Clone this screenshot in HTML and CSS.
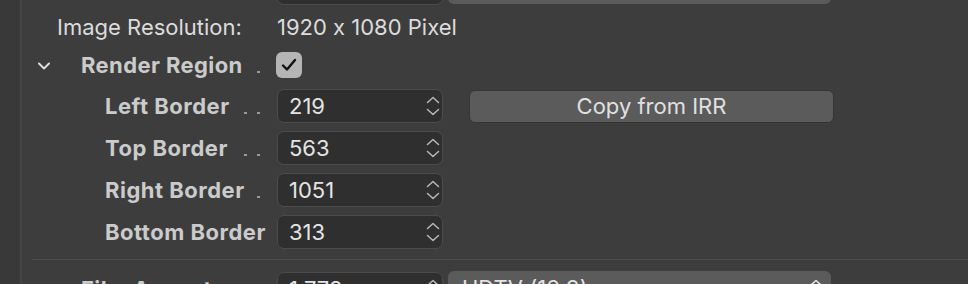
FILE: index.html
```html
<!DOCTYPE html>
<html lang="en">
<head>
    <meta charset="UTF-8">
    <title>Render Settings</title>
    <link rel="stylesheet" href="styles.css">
</head>
<body>
    <div class="window">
        <div class="gutter"></div>
        <div class="panel">
            <!-- previous row, mostly scrolled out of view -->
            <div class="row row-top">
                <div class="label"></div>
                <div class="field"></div>
                <div class="popup"></div>
            </div>

            <div class="row row-info">
                <div class="label info-label">Image Resolution:</div>
                <div class="info-value">1920 x 1080 Pixel</div>
            </div>

            <div class="row row-group">
                <div class="label group-label">
                    <svg class="disclosure" width="14" height="10" viewBox="0 0 14 10">
                        <path d="M2 2.5 L7 7.5 L12 2.5" />
                    </svg>
                    <span class="name">Render Region</span>
                    <span class="leader"><i></i></span>
                </div>
                <div class="checkbox">
                    <svg width="26" height="26" viewBox="0 0 26 26">
                        <path d="M7 13.5 L11 17.5 L19 8" />
                    </svg>
                </div>
            </div>

            <div class="row row-field">
                <div class="label sub-label">
                    <span class="name">Left Border</span>
                    <span class="leader"><i></i><i></i></span>
                </div>
                <div class="field">
                    <span>219</span>
                    <svg class="stepper" width="14" height="22" viewBox="0 0 14 22">
                        <path d="M1.5 7.5 L7 2.5 L12.5 7.5" />
                        <path d="M1.5 14.5 L7 19.5 L12.5 14.5" />
                    </svg>
                </div>
                <button class="btn">Copy from IRR</button>
            </div>

            <div class="row row-field">
                <div class="label sub-label">
                    <span class="name">Top Border</span>
                    <span class="leader"><i></i><i></i></span>
                </div>
                <div class="field">
                    <span>563</span>
                    <svg class="stepper" width="14" height="22" viewBox="0 0 14 22">
                        <path d="M1.5 7.5 L7 2.5 L12.5 7.5" />
                        <path d="M1.5 14.5 L7 19.5 L12.5 14.5" />
                    </svg>
                </div>
            </div>

            <div class="row row-field">
                <div class="label sub-label">
                    <span class="name">Right Border</span>
                    <span class="leader"><i></i></span>
                </div>
                <div class="field">
                    <span>1051</span>
                    <svg class="stepper" width="14" height="22" viewBox="0 0 14 22">
                        <path d="M1.5 7.5 L7 2.5 L12.5 7.5" />
                        <path d="M1.5 14.5 L7 19.5 L12.5 14.5" />
                    </svg>
                </div>
            </div>

            <div class="row row-field">
                <div class="label sub-label">
                    <span class="name">Bottom Border</span>
                </div>
                <div class="field">
                    <span>313</span>
                    <svg class="stepper" width="14" height="22" viewBox="0 0 14 22">
                        <path d="M1.5 7.5 L7 2.5 L12.5 7.5" />
                        <path d="M1.5 14.5 L7 19.5 L12.5 14.5" />
                    </svg>
                </div>
            </div>

            <div class="separator"></div>

            <div class="row row-field">
                <div class="label group-label">
                    <span class="name">Film Aspect</span>
                    <span class="leader"><i></i></span>
                </div>
                <div class="field">
                    <span>1.778</span>
                    <svg class="stepper" width="14" height="22" viewBox="0 0 14 22">
                        <path d="M1.5 7.5 L7 2.5 L12.5 7.5" />
                        <path d="M1.5 14.5 L7 19.5 L12.5 14.5" />
                    </svg>
                </div>
                <div class="popup">
                    <span>HDTV (16:9)</span>
                    <svg class="stepper" width="14" height="22" viewBox="0 0 14 22">
                        <path d="M2.5 7.5 L7 3.5 L11.5 7.5" />
                        <path d="M2.5 14.5 L7 18.5 L11.5 14.5" />
                    </svg>
                </div>
            </div>
        </div>
    </div>
</body>
</html>
```

FILE: styles.css
```css
body {
    margin: 0;
    background: #3d3d3d;
    font-family: Inter, "Liberation Sans", sans-serif;
    font-size: 22px;
    font-feature-settings: "calt" 0;
    color: #dcdcdc;
    overflow: hidden;
}
.window {
    display: flex;
    width: 968px;
    height: 284px;
    overflow: hidden;
}
.gutter {
    width: 20px;
    flex: none;
    background: #393939;
    border-right: 2px solid #454545;
}
.panel {
    flex: 1;
    margin-top: -33px;
}
.row {
    display: flex;
    align-items: center;
    height: 42px;
}
.row-info {
    height: 36px;
}
.row-group {
    height: 40px;
}
.label {
    width: 255px;
    flex: none;
    display: flex;
    align-items: baseline;
    box-sizing: border-box;
}
.info-label {
    padding-left: 35px;
}
.group-label {
    padding-left: 59px;
    position: relative;
    font-weight: 700;
    letter-spacing: 0.4px;
    color: #cbcbcb;
}
.sub-label {
    padding-left: 83px;
    font-weight: 700;
    letter-spacing: 0.5px;
    color: #cbcbcb;
}
.disclosure {
    position: absolute;
    left: 15px;
    top: 9px;
}
.disclosure path {
    fill: none;
    stroke: #dedede;
    stroke-width: 2;
    stroke-linecap: round;
    stroke-linejoin: round;
}
.leader {
    margin-left: auto;
    padding-right: 17px;
    display: flex;
}
.leader i {
    display: block;
    width: 3px;
    height: 2px;
    margin-left: 10px;
    background: #9a9a9a;
}
.checkbox {
    width: 26px;
    height: 26px;
    border-radius: 6px;
    background: #b5b5b5;
    margin-left: -1px;
}
.checkbox path {
    fill: none;
    stroke: #111;
    stroke-width: 2.4;
    stroke-linecap: round;
    stroke-linejoin: round;
}
.field {
    width: 166px;
    height: 34px;
    box-sizing: border-box;
    border: 1px solid #4b4b4b;
    border-radius: 7px;
    background: #2f2f2f;
    display: flex;
    align-items: center;
    padding-left: 11px;
    color: #e4e4e4;
}
.stepper {
    margin-left: auto;
    margin-right: 2px;
}
.stepper path {
    fill: none;
    stroke: #b8b8b8;
    stroke-width: 1.5;
    stroke-linecap: round;
    stroke-linejoin: round;
}
.popup {
    width: 383px;
    height: 34px;
    box-sizing: border-box;
    margin-left: 5px;
    margin-top: -3px;
    border-radius: 6px;
    background: #5b5b5b;
    display: flex;
    align-items: center;
    padding-left: 14px;
    padding-right: 6px;
    color: #e4e4e4;
}
.popup .stepper path {
    stroke: #eeeeee;
}
.btn {
    width: 365px;
    height: 33px;
    margin-left: 26px;
    border: 1px solid #353535;
    border-radius: 6px;
    background: #5b5b5b;
    color: #e0e0e0;
    font-family: inherit;
    font-size: 22px;
    font-feature-settings: inherit;
}
.separator {
    height: 1px;
    background: #4c4c4c;
    margin: 6px 0 8px 10px;
}
```
